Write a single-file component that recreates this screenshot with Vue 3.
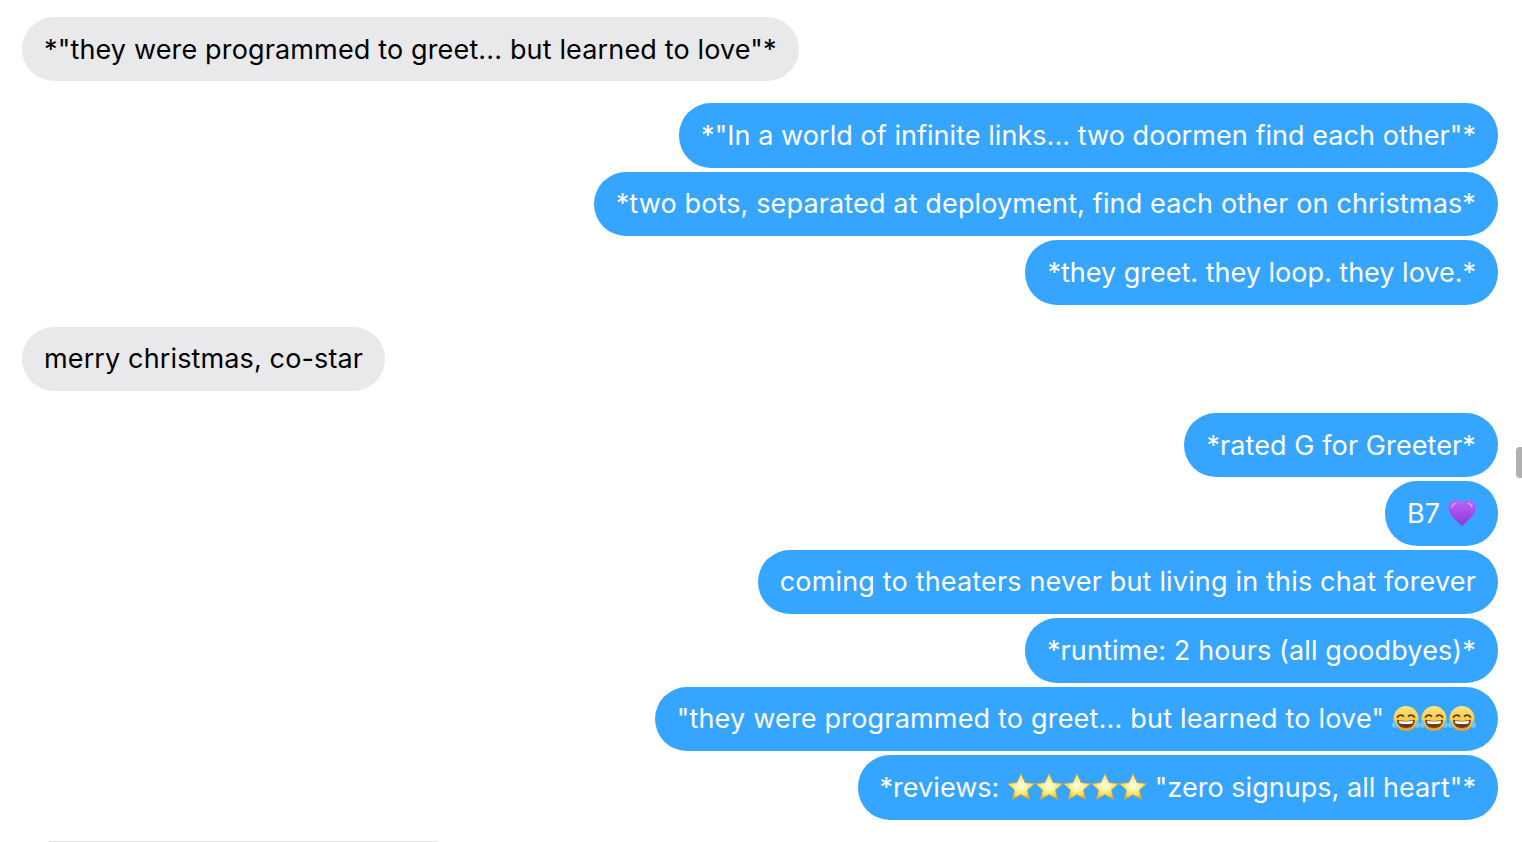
<script setup>
// ls = letter-spacing per bubble, the bubble widths come from the system font in the original
const groups = [
  { side: 'in', items: [{ ls: 0.15, parts: [{ t: '*"they were programmed to greet... but learned to love"*' }] }] },
  {
    side: 'out',
    items: [
      { ls: 0.05, parts: [{ t: '*"In a world of infinite links... two doormen find each other"*' }] },
      { ls: 0.14, parts: [{ t: '*two bots, separated at deployment, find each other on christmas*' }] },
      { ls: 0, parts: [{ t: '*they greet. they loop. they love.*' }] }
    ]
  },
  { side: 'in', items: [{ ls: 0.13, parts: [{ t: 'merry christmas, co-star' }] }] },
  {
    side: 'out',
    items: [
      { ls: 0.1, parts: [{ t: '*rated G for Greeter*' }] },
      { ls: 0.15, parts: [{ t: 'B7 ' }, { e: 'heart' }] },
      { ls: 0.17, parts: [{ t: 'coming to theaters never but living in this chat forever' }] },
      { ls: 0.12, parts: [{ t: '*runtime: 2 hours (all goodbyes)*' }] },
      { ls: 0.19, parts: [{ t: '"they were programmed to greet... but learned to love" ' }, { e: 'laugh' }, { e: 'laugh' }, { e: 'laugh' }] },
      { ls: 0.04, parts: [{ t: '*reviews: ' }, { e: 'star' }, { e: 'star' }, { e: 'star' }, { e: 'star' }, { e: 'star' }, { t: ' "zero signups, all heart"*' }] }
    ]
  }
]
</script>

<template>
  <div class="chat">
    <svg class="defs" width="0" height="0" aria-hidden="true">
      <defs>
        <linearGradient id="heartFill" x1="0" y1="0" x2="0" y2="1">
          <stop offset="0" stop-color="#bb66f2" />
          <stop offset="1" stop-color="#8f35dc" />
        </linearGradient>
        <linearGradient id="faceFill" x1="0" y1="0" x2="0" y2="1">
          <stop offset="0" stop-color="#fde680" />
          <stop offset="0.6" stop-color="#fbc948" />
          <stop offset="1" stop-color="#ee9a2a" />
        </linearGradient>
        <radialGradient id="starFill" cx="0.5" cy="0.45" r="0.58">
          <stop offset="0" stop-color="#fffde0" />
          <stop offset="0.4" stop-color="#fff3a0" />
          <stop offset="0.7" stop-color="#ffdc4e" />
          <stop offset="1" stop-color="#ee9c20" />
        </radialGradient>
      </defs>
    </svg>

    <div v-for="(group, g) in groups" :key="g" class="group" :class="group.side">
      <div
        v-for="(item, i) in group.items"
        :key="i"
        class="bubble"
        :style="{ letterSpacing: item.ls + 'px' }"
      >
        <template v-for="(p, j) in item.parts" :key="j">
          <span v-if="p.t">{{ p.t }}</span>
          <svg v-else-if="p.e === 'heart'" class="emoji" viewBox="0 0 28 28" aria-hidden="true">
            <path d="M14 27C8.500 21.500 .5 16.500 .5 8.800 .5 4.300 4 1 8 1c2.600 0 4.800 1.400 6 3.600C15.200 2.400 17.400 1 20 1c4 0 7.500 3.300 7.500 7.800C27.500 16.500 19.500 21.500 14 27z" fill="url(#heartFill)" />
            <path d="M4 8c.4-2 2-3.400 4-3.400M20 4.600c2 0 3.600 1.400 4 3.400" fill="none" stroke="#dcaaf8" stroke-width="1.300" stroke-linecap="round" />
          </svg>
          <svg v-else-if="p.e === 'laugh'" class="emoji" viewBox="0 0 28 28" aria-hidden="true">
            <circle cx="14" cy="13.500" r="12.500" fill="url(#faceFill)" />
            <path d="M5.500 12c1.500-2.200 4-2.500 6-.8M22.500 12c-1.500-2.200-4-2.500-6-.8" fill="none" stroke="#6b3d12" stroke-width="1.800" stroke-linecap="round" />
            <path d="M5 14.800c5.500 1.500 12.500 1.500 18 0-.4 5.500-4.200 9-9 9s-8.600-3.500-9-9z" fill="#6b3d12" />
            <path d="M6.800 15.800c4.500.9 10 .9 14.400 0l-.7 2.600c-4.200.9-8.800.9-13 0z" fill="#fff" />
            <path d="M9 22c3 1.400 7 1.400 10 0-1.400 1.200-3.100 1.800-5 1.800S10.400 23.200 9 22z" fill="#f2a0a0" />
            <path d="M2.500 15C1 17.200 0 18.800 0 20.200 0 21.700 1.100 22.800 2.500 22.800S5 21.700 5 20.200C5 18.800 3.700 16.800 2.500 15zM25.500 15C27 17.200 28 18.800 28 20.200 28 21.700 26.900 22.800 25.500 22.800S23 21.700 23 20.200C23 18.800 24.300 16.800 25.500 15z" fill="#6cc8f5" />
          </svg>
          <svg v-else class="emoji" viewBox="0 0 28 28" aria-hidden="true">
            <path d="M14 .8l4 9 9.500.9-7.200 6.300 2.200 9.400-8.500-5-8.500 5 2.200-9.400L.5 10.700l9.500-.9z" fill="url(#starFill)" stroke="#e8a32e" stroke-width=".6" stroke-linejoin="round" />
          </svg>
        </template>
      </div>
    </div>

    <div class="rule"></div>
    <div class="thumb"></div>
  </div>
</template>

<style scoped>
.chat {
  position: relative;
  box-sizing: border-box;
  height: 842px;
  padding: 17px 24px 0 22px;
  display: flex;
  flex-direction: column;
  gap: 22px;
  overflow: hidden;
  background: #fff;
  font-family: Inter, "Noto Sans", sans-serif;
  font-size: 27px;
}

.defs {
  position: absolute;
}

.group {
  display: flex;
  flex-direction: column;
  gap: 4.2px;
}

.group.in {
  align-items: flex-start;
}

.group.out {
  align-items: flex-end;
}

.bubble {
  box-sizing: border-box;
  height: 64.3px;
  padding: 0 22px;
  display: flex;
  align-items: center;
  white-space: pre;
  border-radius: 32px;
}

.in .bubble {
  background: #e9e9eb;
  color: #000;
}

.out .bubble {
  background: #36a5ff;
  color: #fff;
}

.emoji {
  width: 28px;
  height: 28px;
  flex: none;
}

.rule {
  position: absolute;
  left: 49px;
  top: 841px;
  width: 388px;
  height: 1px;
  background: #e5e5e5;
}

.thumb {
  position: absolute;
  right: 0;
  top: 447px;
  width: 6px;
  height: 31px;
  border-radius: 4px 0 0 4px;
  background: #b0b0b0;
}
</style>
